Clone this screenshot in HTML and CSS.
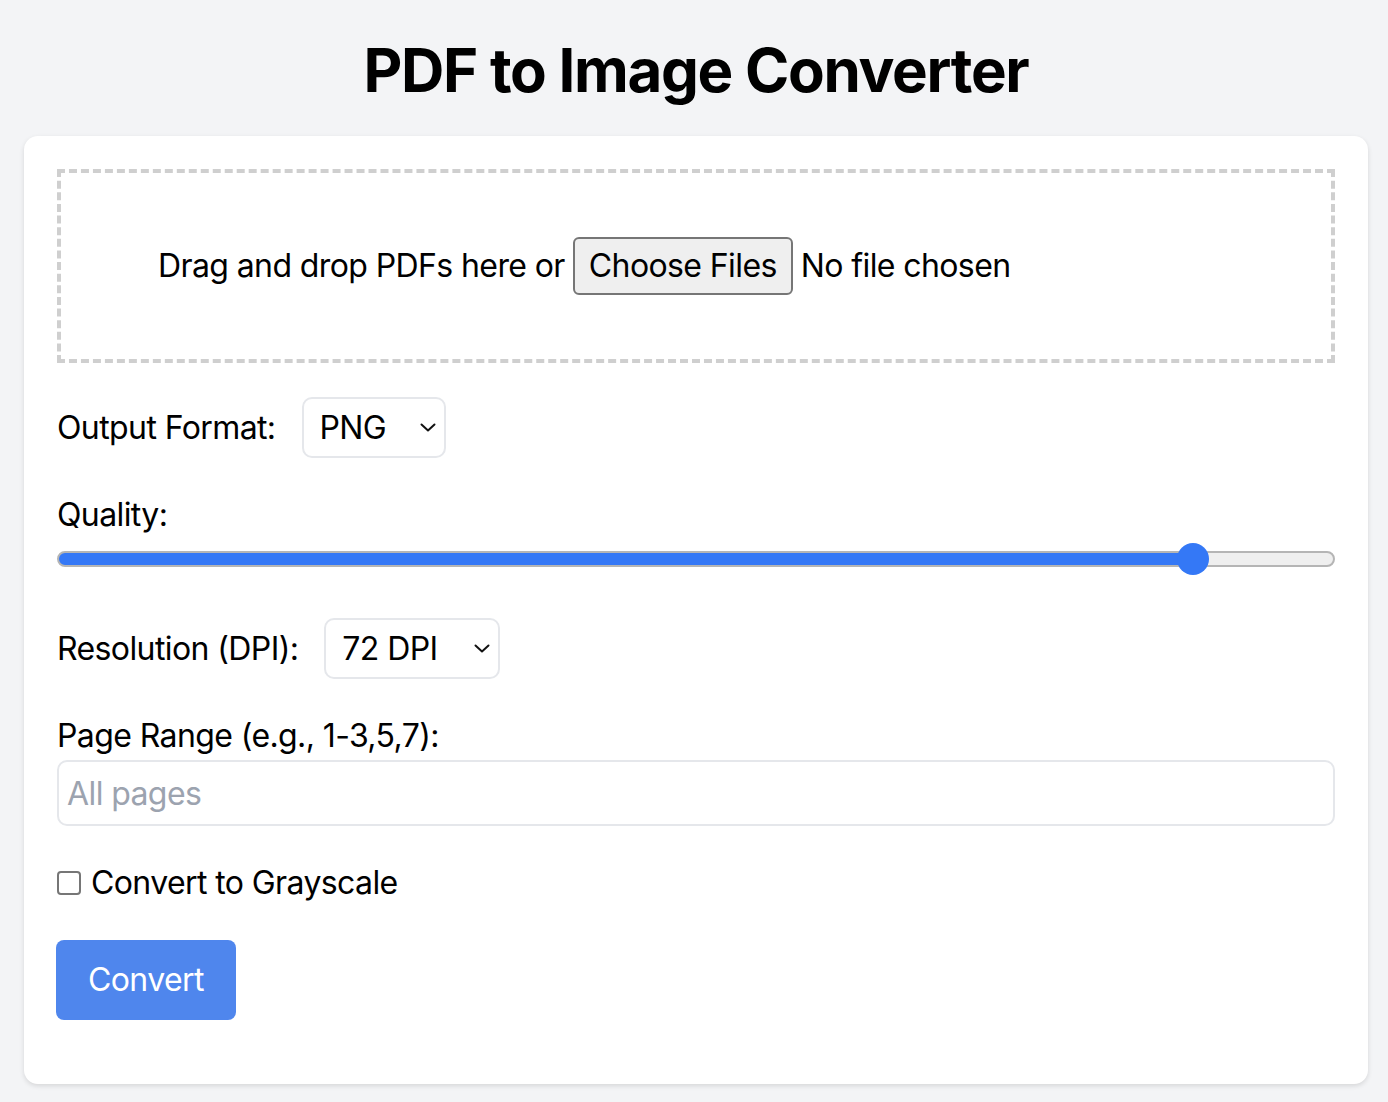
FILE: index.html
```html
<!DOCTYPE html>
<html lang="en">
<head>
    <meta charset="UTF-8">
    <meta name="viewport" content="width=device-width, initial-scale=1.0">
    <title>PDF to Image Converter</title>
    <link rel="stylesheet" href="styles.css">
</head>
<body>
    <h1>PDF to Image Converter</h1>
    <div class="card">
        <div class="drop-zone" id="dropZone">
            <span>Drag and drop PDFs here or</span>
            <label class="file-btn" for="fileInput">Choose Files</label>
            <span id="fileName">No file chosen</span>
            <input type="file" id="fileInput" accept="application/pdf" multiple>
        </div>

        <div class="field row">
            <label for="format">Output Format:</label>
            <div class="select-wrap">
                <select id="format" class="select format-select">
                    <option>PNG</option>
                    <option>JPEG</option>
                    <option>WEBP</option>
                </select>
                <svg class="chevron" viewBox="0 0 16 9" width="16" height="9">
                    <path d="M1.5 1.5 L8 7.5 L14.5 1.5" fill="none" stroke="#111" stroke-width="2" stroke-linecap="round" stroke-linejoin="round"/>
                </svg>
            </div>
        </div>

        <div class="field slider-field">
            <label for="quality" class="block-label">Quality:</label>
            <input type="range" id="quality" class="slider" min="0" max="100" value="90" style="--fill: 90%">
        </div>

        <div class="field row">
            <label for="dpi">Resolution (DPI):</label>
            <div class="select-wrap">
                <select id="dpi" class="select dpi-select">
                    <option>72 DPI</option>
                    <option>150 DPI</option>
                    <option>300 DPI</option>
                </select>
                <svg class="chevron" viewBox="0 0 16 9" width="16" height="9">
                    <path d="M1.5 1.5 L8 7.5 L14.5 1.5" fill="none" stroke="#111" stroke-width="2" stroke-linecap="round" stroke-linejoin="round"/>
                </svg>
            </div>
        </div>

        <div class="field">
            <label for="pageRange" class="block-label tight">Page Range (e.g., 1-3,5,7):</label>
            <input type="text" id="pageRange" class="text-input" placeholder="All pages">
        </div>

        <div class="field row check-row">
            <input type="checkbox" id="grayscale" class="checkbox">
            <label for="grayscale">Convert to Grayscale</label>
        </div>

        <div class="field">
            <button class="convert-btn" onclick="convert()">Convert</button>
        </div>
    </div>

    <script>
        const fileInput = document.getElementById("fileInput");
        fileInput.addEventListener("change", () => {
            const count = fileInput.files.length;
            document.getElementById("fileName").innerText =
                count === 0 ? "No file chosen" : count === 1 ? fileInput.files[0].name : `${count} files`;
        });

        const quality = document.getElementById("quality");
        quality.addEventListener("input", () => {
            quality.style.setProperty("--fill", quality.value + "%");
        });

        function convert() {
            if (!fileInput.files.length) {
                alert("Please choose a PDF first.");
            }
        }
    </script>
</body>
</html>
```

FILE: styles.css
```css
body {
    font-family: 'Inter', 'Noto Sans', sans-serif;
    background-color: #f3f4f6;
    color: #000;
    margin: 0;
    padding: 34px 20px 18px 24px;
    font-size: 32px;
    letter-spacing: -0.6px;
}
h1 {
    font-size: 60px;
    line-height: 72px;
    font-weight: 700;
    text-align: center;
    margin: 0 0 30px;
    letter-spacing: -1.3px;
}
.card {
    background: #fff;
    border-radius: 14px;
    box-shadow: 0 2px 5px rgba(0, 0, 0, 0.12);
    padding: 33px 33px 31px;
}
.drop-zone {
    border: 4px dashed #cfcfcf;
    padding: 64px 64px 64px 97px;
    display: flex;
    align-items: center;
    gap: 8px;
    line-height: 48px;
    margin-bottom: 34px;
}
.drop-zone input[type="file"] {
    display: none;
}
.file-btn {
    background: #efefef;
    border: 2px solid #767676;
    border-radius: 6px;
    padding: 0 14px;
    height: 54px;
    line-height: 54px;
    cursor: pointer;
}
.field {
    margin-bottom: 33px;
    line-height: 48px;
}
.row {
    display: flex;
    align-items: center;
}
.select-wrap {
    position: relative;
    margin-left: 26px;
}
.select {
    appearance: none;
    font-family: inherit;
    font-size: 32px;
    letter-spacing: -0.6px;
    color: #000;
    background: #fff;
    border: 2px solid #e5e7eb;
    border-radius: 10px;
    height: 61px;
    padding: 0 0 0 16px;
    display: block;
}
.format-select {
    width: 144px;
}
.dpi-select {
    width: 176px;
}
.chevron {
    position: absolute;
    right: 10px;
    top: 26px;
    pointer-events: none;
}
.block-label {
    display: block;
    margin-bottom: 4px;
}
.block-label.tight {
    margin-bottom: 0;
}
.slider-field {
    margin-bottom: 0;
}
.slider {
    appearance: none;
    display: block;
    width: 100%;
    height: 16px;
    margin: 12px 0 51px;
    border-radius: 8px;
    border: 2px solid #b5b5b5;
    background: linear-gradient(to right, #3478f6 var(--fill), #efefef var(--fill));
    box-sizing: border-box;
}
.slider::-webkit-slider-thumb {
    appearance: none;
    width: 32px;
    height: 32px;
    border-radius: 50%;
    background: #3478f6;
    border: none;
    cursor: pointer;
}
.text-input {
    display: block;
    width: 100%;
    box-sizing: border-box;
    height: 66px;
    border: 2px solid #e5e7eb;
    border-radius: 10px;
    padding: 0 8px;
    font-family: inherit;
    font-size: 32px;
    letter-spacing: -0.6px;
    outline: none;
}
.text-input::placeholder {
    color: #9ca3af;
}
.check-row {
    gap: 10px;
}
.checkbox {
    appearance: none;
    width: 24px;
    height: 24px;
    margin: 0;
    border: 2px solid #767676;
    border-radius: 4px;
    background: #fff;
    cursor: pointer;
}
.checkbox:checked {
    background: #3478f6;
    border-color: #3478f6;
}
.convert-btn {
    background: #4f86ed;
    color: #fff;
    border: none;
    border-radius: 8px;
    font-family: inherit;
    font-size: 32px;
    letter-spacing: -0.6px;
    line-height: 48px;
    padding: 16px 32px;
    margin-left: -1px;
    cursor: pointer;
    display: block;
}
.convert-btn:hover {
    background: #3b76e0;
}
```
